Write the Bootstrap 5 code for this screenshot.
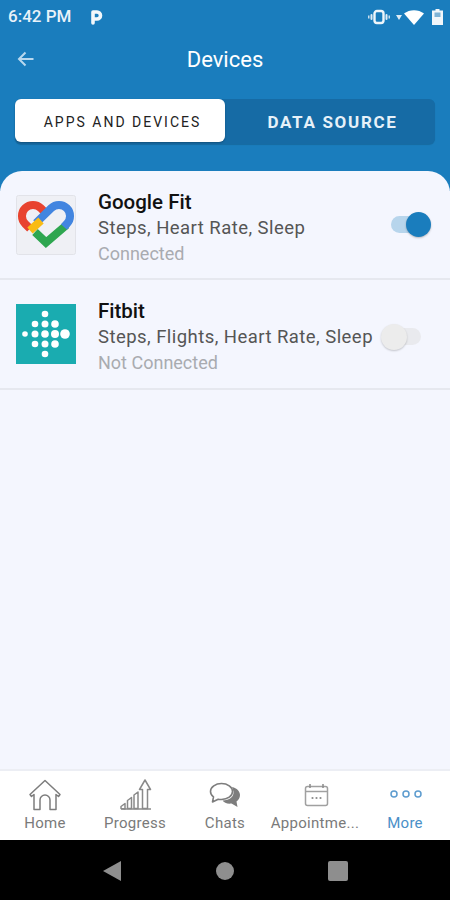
<!DOCTYPE html>
<html lang="en">
<head>
  <meta charset="UTF-8" />
  <meta name="viewport" content="width=device-width, initial-scale=1.0" />
  <title>Devices</title>
  <link href="https://cdn.jsdelivr.net/npm/bootstrap@5.3.0/dist/css/bootstrap.min.css" rel="stylesheet" />
  <style>
    html, body { height: 900px; overflow: hidden; }
    body { font-family: Roboto, "Liberation Sans", sans-serif; background: #f4f6fe; }
    .app-shell { height: 900px; }
    .top-area { background: #1a7dbd; height: 191px; flex: none; }
    .status-row { height: 34px; padding: 0 7px 0 8px; color: #e9f2f9; font-size: 17px; font-weight: 500; }
    .p-mark { margin-left: 18px; }
    .title-row { height: 65px; color: #fff; padding-bottom: 13px; }
    .title-row h1 { font-size: 22px; font-weight: 400; margin: 0; line-height: 1; }
    .back-btn { left: 17px; top: 17px; }
    .tab-bar { margin: 0 15px; height: 45px; background: #166ba5; border-radius: 6px; box-shadow: 0 1px 1px rgba(0,0,0,.15); }
    .tab-bar .btn { flex: 1 1 50%; border: 0; border-radius: 6px; padding: 3px 0 0 5px; font-size: 17px; letter-spacing: 1.7px; }
    .tab-on, .tab-on:hover { background: #fff; color: #222; font-weight: 400; height: 43px; font-size: 14px !important; letter-spacing: 2px !important; box-shadow: 0 1px 2px rgba(0,0,0,.25); }
    .tab-off, .tab-off:hover { background: transparent; color: #e6f1f9; font-weight: 700; }
    .sheet { background: #f4f6fe; border-radius: 22px 22px 0 0; margin-top: -20px; position: relative; }
    .device-row { background: transparent; border-style: solid; border-color: #e6e8ef; border-width: 0 0 2px !important; border-radius: 0 !important; padding: 0 0 0 16px; gap: 22px; }
    .row-a { height: 109px; }
    .row-b { height: 110px; }
    .logo-box { width: 60px; height: 60px; flex: none; display: block; }
    .dev-name { font-size: 20.5px; font-weight: 500; color: #111; line-height: 26px; }
    .dev-sub { font-size: 18.5px; letter-spacing: .45px; color: #555; line-height: 27px; white-space: nowrap; }
    .dev-state { font-size: 18px; color: #a9abb0; line-height: 24px; white-space: nowrap; }
    .dev-text { padding-top: 5px; }
    .sw-track { display: block; width: 28px; height: 17px; border-radius: 9px; position: relative; flex: none; }
    .sw-track::after { content: ""; position: absolute; border-radius: 50%; }
    .sw-on { background: #b7d5ec; margin-left: auto; margin-right: 31px; }
    .sw-on::after { width: 25px; height: 25px; right: -12px; top: -4px; background: #1a7dbd; box-shadow: 0 1px 2px rgba(0,0,0,.25); }
    .sw-off { background: #e9eaee; margin-left: -2px; margin-top: 5px; }
    .sw-off::after { width: 26px; height: 26px; left: -12px; top: -4px; background: #ececec; box-shadow: 0 1px 2px rgba(0,0,0,.2); }
    .bottom-tabs { height: 71px; background: #fff; border-top: 2px solid #eceef4; flex: none; }
    .tab-link { flex: 1 1 0; min-width: 0; color: #7a7a7a; font-size: 15px; letter-spacing: .3px; line-height: 17px; text-decoration: none; padding-top: 8px; white-space: nowrap; }
    .tab-link svg { display: block; height: 36px; }
    .tab-link.tab-more { color: #4a90c8; }
    .sys-nav { height: 60px; background: #000; flex: none; }
  </style>
</head>
<body>
<div class="app-shell d-flex flex-column">
  <!-- Blue header -->
  <div class="top-area">
    <div class="status-row d-flex align-items-center">
      <span>6:42 PM</span>
      <svg class="p-mark" width="14" height="16" viewBox="0 0 14 16"><path d="M4 14V3h4a3.2 3.2 0 0 1 0 7H4" fill="none" stroke="#f2f7fb" stroke-width="3.6" stroke-linecap="round" stroke-linejoin="round"/></svg>
      <span class="ms-auto d-flex align-items-center">
        <svg width="22" height="16" viewBox="0 0 22 16"><rect x="6.500" y="2" width="9" height="12" rx="2.500" fill="none" stroke="#eef5fa" stroke-width="2.400"/><rect x="2.500" y="5" width="2" height="6" rx="1" fill="#dfecf5"/><rect x="17.500" y="5" width="2" height="6" rx="1" fill="#dfecf5"/><rect x="0" y="6.500" width="1.500" height="3" fill="#c9dfee"/><rect x="20.500" y="6.500" width="1.500" height="3" fill="#c9dfee"/></svg>
        <svg style="margin-left:6px" width="6" height="5" viewBox="0 0 6 5"><path d="M0 0h6L3 5z" fill="#dfecf5"/></svg>
        <svg style="margin-left:2px" width="20" height="15" viewBox="0 0 20 15"><path d="M0 3.500C5.500-1 14.500-1 20 3.500L10 15z" fill="#fff"/></svg>
        <svg style="margin-left:8px" width="11" height="16" viewBox="0 0 11 16"><path d="M3.500 0h4v1.500h3.500V16H0V1.500h3.500z" fill="#f1f6fa"/><rect x="2.500" y="3.500" width="6" height="4.500" fill="#7fb3d6"/></svg>
      </span>
    </div>
    <div class="title-row position-relative d-flex justify-content-center align-items-center">
      <svg class="back-btn position-absolute" width="18" height="16" viewBox="0 0 18 16"><path d="M16.500 8H2M8.500 1.500 2 8l6.500 6.500" fill="none" stroke="#b9d8ee" stroke-width="2"/></svg>
      <h1>Devices</h1>
    </div>
    <div class="tab-bar d-flex">
      <button type="button" class="btn tab-on">APPS AND DEVICES</button>
      <button type="button" class="btn tab-off">DATA SOURCE</button>
    </div>
  </div>

  <!-- Device list -->
  <div class="sheet flex-grow-1">
    <div class="list-group list-group-flush">
      <div class="list-group-item device-row row-a d-flex align-items-center">
        <svg class="logo-box" viewBox="0 0 60 60">
          <rect x=".5" y=".5" width="59" height="59" rx="2" fill="#eff0f5" stroke="#e2e3e9"/>
          <g fill="none" stroke-width="8">
            <path d="M31 19.400 24.800 13.200A11 11 0 0 0 9.200 28.800L14 33.600" stroke="#e8432f"/>
            <path d="M50.500 30 30 47.500 19 37" stroke="#2ea650"/>
            <path d="M20 28 35.200 13.200A11 11 0 0 1 50.800 28.800L48 32" stroke="#4285e0"/>
            <path d="M14 35.500 25 25.500" stroke="#f9bb15"/>
          </g>
        </svg>
        <div class="dev-text">
          <div class="dev-name">Google Fit</div>
          <div class="dev-sub">Steps, Heart Rate, Sleep</div>
          <div class="dev-state">Connected</div>
        </div>
        <span class="sw-track sw-on"></span>
      </div>
      <div class="list-group-item device-row row-b d-flex align-items-center">
        <svg class="logo-box" viewBox="0 0 60 60">
          <rect width="60" height="60" fill="#1aacb0"/>
          <g fill="#fff">
            <circle cx="9" cy="30" r="2.800"/>
            <circle cx="19" cy="20" r="3.300"/><circle cx="19" cy="30" r="3.500"/><circle cx="19" cy="40" r="3.300"/>
            <circle cx="29" cy="10" r="3.300"/><circle cx="29" cy="20" r="3.500"/><circle cx="29" cy="30" r="3.800"/><circle cx="29" cy="40" r="3.500"/><circle cx="29" cy="50" r="3.300"/>
            <circle cx="39" cy="20" r="3.800"/><circle cx="39" cy="30" r="4"/><circle cx="39" cy="40" r="3.800"/>
            <circle cx="49" cy="30" r="4.800"/>
          </g>
        </svg>
        <div class="dev-text">
          <div class="dev-name">Fitbit</div>
          <div class="dev-sub">Steps, Flights, Heart Rate, Sleep</div>
          <div class="dev-state">Not Connected</div>
        </div>
        <span class="sw-track sw-off"></span>
      </div>
    </div>
  </div>

  <!-- Bottom tabs -->
  <nav class="bottom-tabs d-flex px-0">
    <a class="tab-link d-flex flex-column align-items-center" href="#">
      <svg width="34" height="36" viewBox="0 0 34 36" fill="none" stroke="#7d7d7d" stroke-width="1.500" stroke-linejoin="round"><path d="M3 15.500 18 1.500l15 14-1.500 2-2.500-2V30.500h-6V21a5 5 0 0 0-10 0v9.500H7V15.500l-2.500 2z" transform="translate(-1 0)"/></svg>
      <span>Home</span>
    </a>
    <a class="tab-link d-flex flex-column align-items-center" href="#">
      <svg width="34" height="36" viewBox="0 0 34 36" fill="none" stroke="#8a8a8a" stroke-width="1.500" stroke-linejoin="round"><path d="M3 29.500v-2l4-3v5.500zM9.500 29.500v-8l4-3v11zM16 29.500V16l4-3v16.500zM24.500 29.500V10.500h-3L27 1l5.500 9.500h-3v19z"/><path d="M3 30h30"/></svg>
      <span>Progress</span>
    </a>
    <a class="tab-link d-flex flex-column align-items-center" href="#">
      <svg width="34" height="36" viewBox="0 0 34 36"><path d="M24 8c5 1 8 4.500 8 8 0 3-1.500 5-3.500 6.500l1 5.500-6-3.500c-4 .5-7.500-.5-9-3 7 0 11.500-3.500 11-9z" fill="#7d7d7d"/><path d="M13.500 4.500c6 0 11 3.500 11 8s-5 8-11 8c-1.200 0-2.300 0-3.300-.3L4.500 23l1-5.200C3.300 16.300 2.500 14.500 2.500 12.500c0-4.500 5-8 11-8z" fill="#fff" stroke="#7d7d7d" stroke-width="1.600" stroke-linejoin="round"/></svg>
      <span>Chats</span>
    </a>
    <a class="tab-link d-flex flex-column align-items-center" href="#">
      <svg width="34" height="36" viewBox="0 0 34 36" fill="none" stroke="#a0a0a0" stroke-width="1.500"><rect x="7.500" y="7.500" width="22" height="19" rx="2"/><path d="M7.500 12.500h22" /><path d="M12 5v4M25 5v4" stroke="#8a8a8a"/><g fill="#8a8a8a" stroke="none"><circle cx="14.500" cy="19" r="1.100"/><circle cx="18.500" cy="19" r="1.100"/><circle cx="22.500" cy="19" r="1.100"/></g></svg>
      <span>Appointme...</span>
    </a>
    <a class="tab-link tab-more d-flex flex-column align-items-center" href="#">
      <svg width="34" height="36" viewBox="0 0 34 36" fill="none" stroke="#5d9ccf" stroke-width="1.500"><circle cx="6" cy="15" r="3"/><circle cx="18" cy="15" r="3"/><circle cx="30" cy="15" r="3"/></svg>
      <span>More</span>
    </a>
  </nav>

  <!-- Android system nav -->
  <div class="sys-nav d-flex align-items-center">
    <svg width="450" height="60" viewBox="0 0 450 60"><path d="M103 31 121 21v20z" fill="#8e8e8e"/><circle cx="225" cy="31" r="9" fill="#8e8e8e"/><rect x="328" y="21" width="20" height="20" rx="2" fill="#8e8e8e"/></svg>
  </div>
</div>
<script src="https://cdn.jsdelivr.net/npm/bootstrap@5.3.0/dist/js/bootstrap.bundle.min.js"></script>
</body>
</html>
